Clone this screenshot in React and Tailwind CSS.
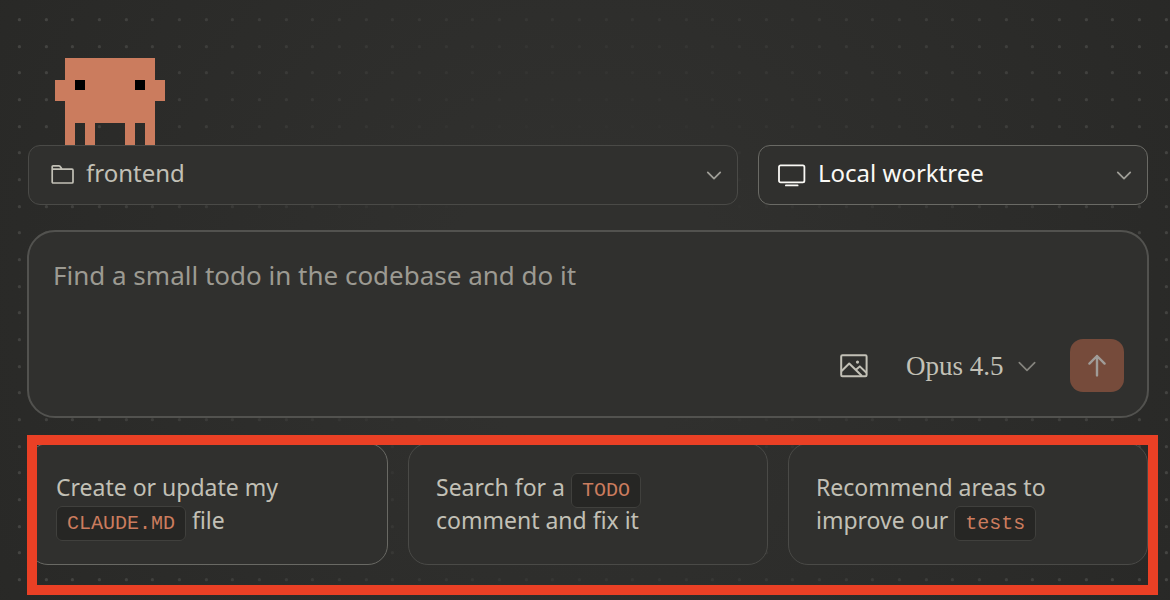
import React from "react";

const dotOffsets = [19, 46, 72];

function DotField() {
  return (
    <div aria-hidden="true" className="absolute inset-0 -z-10">
      <svg className="absolute inset-0 h-full w-full">
        <defs>
          <pattern id="dots" width="80" height="80" patternUnits="userSpaceOnUse">
            {dotOffsets.map((x) =>
              dotOffsets.map((y) => (
                <circle key={`${x}-${y}`} cx={x + 0.4} cy={y + 0.7} r="1.6" fill="#4e4e4b" />
              ))
            )}
          </pattern>
        </defs>
        <rect width="100%" height="100%" fill="url(#dots)" />
      </svg>
      <div className="absolute inset-0 bg-[radial-gradient(circle_at_center,#30302e_22%,#30302e00_130%)]" />
    </div>
  );
}

function Mascot() {
  return (
    <svg viewBox="0 0 110 87" className="ml-[27px] block h-[87px] w-[110px]" role="img" aria-label="Mascot" shapeRendering="crispEdges">
      <path
        fill="#cb7c5e"
        d="M10 0H100V22H110V43H100V87H90V65H80V87H70V65H40V87H30V65H20V87H10V43H0V22H10Z"
      />
      <path fill="#000" d="M20 22h10v10H20zM80 22h10v10H80z" />
    </svg>
  );
}

function Chevron({ className }) {
  return (
    <svg viewBox="0 0 18 10" fill="none" stroke="currentColor" strokeLinecap="round" strokeLinejoin="round" className={className} aria-hidden="true">
      <path d="M2 1.5 9 8.5 16 1.5" />
    </svg>
  );
}

function FolderIcon({ className }) {
  return (
    <svg viewBox="0 0 24 20" fill="none" stroke="currentColor" strokeWidth="1.7" strokeLinejoin="round" className={className} aria-hidden="true">
      <path d="M1.2 4.2V1.8Q1.2 .9 2.1 .9H7.8Q8.6 .9 9 1.4L11.2 4.2H21Q22 4.2 22 5.2V17Q22 18 21 18H2.2Q1.2 18 1.2 17ZM1.2 4.2H11.2" />
    </svg>
  );
}

function MonitorIcon({ className }) {
  return (
    <svg viewBox="0 0 28 24" fill="none" stroke="currentColor" strokeWidth="1.8" strokeLinecap="round" className={className} aria-hidden="true">
      <rect x="1" y="1.3" width="25.4" height="17" rx="1.6" />
      <path d="M7.9 21.4H19.6" />
    </svg>
  );
}

function ImageIcon({ className }) {
  return (
    <svg viewBox="0 0 28 24" fill="none" stroke="currentColor" strokeWidth="2" strokeLinejoin="round" className={className} aria-hidden="true">
      <rect x="1.2" y="1.2" width="25.4" height="21" rx="1.2" />
      <path d="M1.6 17 9.2 9.5 22 22M16.2 15.4 19.8 12.4 26.4 18.8" />
      <circle cx="17.5" cy="8.1" r="1.6" fill="currentColor" stroke="none" />
    </svg>
  );
}

function ArrowUpIcon({ className }) {
  return (
    <svg viewBox="0 0 20 24" fill="none" stroke="currentColor" strokeWidth="2.4" strokeLinecap="round" strokeLinejoin="round" className={className} aria-hidden="true">
      <path d="M10 21.4V2M2.4 9.6 10 2 17.6 9.6" />
    </svg>
  );
}

function Picker({ label, icon, value, className, selectClassName }) {
  return (
    <div className={`relative ${className}`}>
      {icon}
      <select
        aria-label={label}
        defaultValue={value}
        className={`block h-[60px] w-full appearance-none rounded-xl border bg-[#30302e] pr-12 pb-1 text-[24px] leading-8 ${selectClassName}`}
      >
        <option>{value}</option>
      </select>
      <Chevron className="pointer-events-none absolute top-[26px] right-4 h-[9px] w-4 stroke-2 text-[#9f9e97]" />
    </div>
  );
}

function Code({ children }) {
  return (
    <code className="rounded-md border border-[#40403d] bg-[#262624] px-[10px] py-[5px] font-['Liberation_Mono',monospace] text-[20px] leading-5 text-[#cb7c5e]">
      {children}
    </code>
  );
}

function Suggestion({ children, className }) {
  return (
    <button
      type="button"
      className={`rounded-[20px] border bg-[#30302e] px-[27px] py-[27px] text-left text-[23px] leading-[33px] text-[#c2c0b6] ${className}`}
    >
      {children}
    </button>
  );
}

export default function App() {
  return (
    <main className="relative isolate min-h-screen bg-[#262624] pt-[58px] pr-[22px] pb-[35px] pl-7 font-['Noto_Sans',sans-serif]">
      <DotField />
      <Mascot />

      <div className="flex gap-5">
        <Picker
          label="Folder"
          value="frontend"
          icon={<FolderIcon className="pointer-events-none absolute top-5 left-[23px] h-5 w-6 text-[#c2c0b6]" />}
          className="flex-1"
          selectClassName="border-[#4a4a47] pl-[57px] text-[#c2c0b6]"
        />
        <Picker
          label="Environment"
          value="Local worktree"
          icon={<MonitorIcon className="pointer-events-none absolute top-[19px] left-5 h-6 w-7 text-[#faf9f5]" />}
          className="w-1/3 min-w-[390px]"
          selectClassName="border-[#6a6a65] pl-[59px] text-[#faf9f5]"
        />
      </div>

      <form
        onSubmit={(event) => event.preventDefault()}
        className="-mx-px mt-[25px] rounded-[28px] border-2 border-[#52524f] bg-[#30302e] pt-[25px] pr-[23px] pb-6 pl-6"
      >
        <textarea
          aria-label="Prompt"
          placeholder="Find a small todo in the codebase and do it"
          className="block h-[82px] w-full resize-none bg-transparent text-[26px] leading-9 text-[#faf9f5] outline-none placeholder:text-[#9c9a92]"
        />
        <div className="flex items-center justify-end">
          <button type="button" aria-label="Attach image" className="mr-[38px] text-[#c2c0b6]">
            <ImageIcon className="block h-6 w-7" />
          </button>
          <div className="relative mr-[34px]">
            <select
              aria-label="Model"
              defaultValue="Opus 4.5"
              className="block appearance-none bg-transparent pr-8 font-['Liberation_Serif',serif] text-[27px] leading-9 text-[#c2c0b6]"
            >
              <option>Opus 4.5</option>
            </select>
            <Chevron className="pointer-events-none absolute top-[13px] -right-px h-[11px] w-5 stroke-[1.5] text-[#85847e]" />
          </div>
          <button
            type="submit"
            aria-label="Send"
            className="flex h-[53px] w-[54px] items-center justify-center rounded-[13px] bg-[#764b3b] text-[#a09c98]"
          >
            <ArrowUpIcon className="h-6 w-5" />
          </button>
        </div>
      </form>

      <section aria-label="Suggestions" className="relative mt-[25px]">
        <div className="grid grid-cols-3 gap-5">
          <Suggestion className="border-[#696964]">
            Create or update my <br />
            <Code>CLAUDE.MD</Code> file
          </Suggestion>
          <Suggestion className="border-[#4a4a47]">
            Search for a <Code>TODO</Code> <br />
            comment and fix it
          </Suggestion>
          <Suggestion className="border-[#4a4a47]">
            Recommend areas to <br />
            improve our <Code>tests</Code>
          </Suggestion>
        </div>
        <div
          aria-hidden="true"
          className="pointer-events-none absolute -top-2 -right-[10px] -bottom-[30px] -left-px border-[10px] border-[#ea4025]"
        />
      </section>
    </main>
  );
}
